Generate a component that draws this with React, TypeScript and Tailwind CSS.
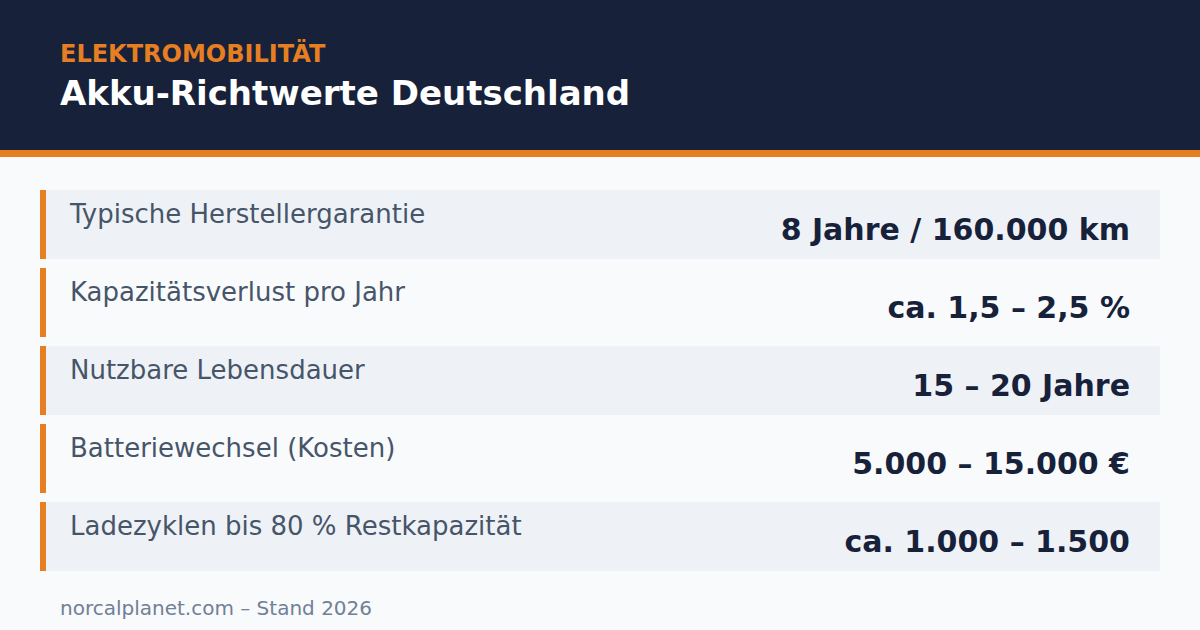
const rows = [
  { label: 'Typische Herstellergarantie', value: '8 Jahre / 160.000 km' },
  { label: 'Kapazitätsverlust pro Jahr', value: 'ca. 1,5 – 2,5 %' },
  { label: 'Nutzbare Lebensdauer', value: '15 – 20 Jahre' },
  { label: 'Batteriewechsel (Kosten)', value: '5.000 – 15.000 €' },
  { label: 'Ladezyklen bis 80 % Restkapazität', value: 'ca. 1.000 – 1.500' },
];

export default function App() {
  return (
    <div className="w-[1200px] h-[630px] overflow-hidden bg-[#f8fafc] font-['DejaVu_Sans',sans-serif]">
      <header className="h-[157px] bg-[#17223a] border-b-[7px] border-[#e67e22] px-[60px] pt-[42px]">
        <div className="text-[24px] leading-none font-bold text-[#e67e22]">ELEKTROMOBILITÄT</div>
        <h1 className="mt-[10px] text-[34px] leading-none font-bold text-white">Akku-Richtwerte Deutschland</h1>
      </header>

      <div className="flex flex-col gap-[9px] pl-[40px] pr-[40px] pt-[33px]">
        {rows.map((row, i) => (
          <div
            key={row.label}
            className={`flex h-[69px] items-start border-l-[6px] border-[#e67e22] ${i % 2 === 0 ? 'bg-[#eef2f7]' : ''}`}
          >
            <div className="flex-1 pl-[24px] pt-[11px] text-[26px] leading-none text-[#475569]">{row.label}</div>
            <div className="pr-[30px] pt-[25px] text-[30px] leading-none font-bold text-[#17223a]">{row.value}</div>
          </div>
        ))}
      </div>

      <div className="px-[60px] pt-[27px] text-[20px] leading-none text-[#718096]">norcalplanet.com – Stand 2026</div>
    </div>
  );
}
